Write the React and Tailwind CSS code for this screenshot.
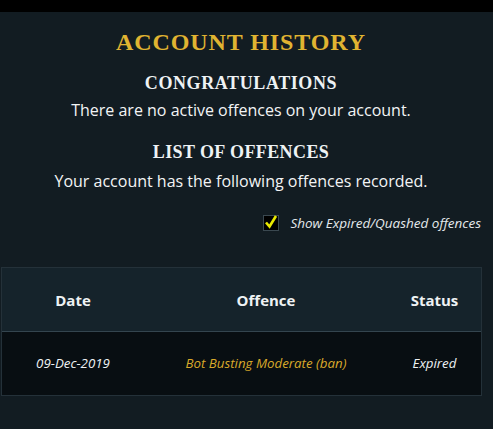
export default function App() {
  const serif = { fontFamily: "'Liberation Serif', serif" };
  return (
    <div className="w-[493px] h-[429px] bg-[#121c22] flex flex-col overflow-hidden" style={{ fontFamily: "'Open Sans', Lato, sans-serif" }}>
      <div className="h-[12px] bg-black shrink-0" />
      <div className="w-[482px] flex flex-col">
        <div className="flex flex-col items-center">
          <h1 className="mt-[16px] text-[24px] leading-[28px] font-bold text-[#e0b431] tracking-[0.9px]" style={serif}>ACCOUNT HISTORY</h1>
          <h2 className="mt-[17px] text-[18px] leading-[20px] font-bold text-[#eef2f4] tracking-[0.6px]" style={serif}>CONGRATULATIONS</h2>
          <p className="mt-[7px] text-[16px] leading-[20px] text-[#f2f4f5]">There are no active offences on your account.</p>
          <h2 className="mt-[22px] text-[18px] leading-[20px] font-bold text-[#eef2f4] tracking-[0.4px]" style={serif}>LIST OF OFFENCES</h2>
          <p className="mt-[9px] text-[16px] leading-[20px] text-[#f2f4f5]">Your account has the following offences recorded.</p>
        </div>
        <div className="mt-[22px] flex items-center justify-end pr-[1px] gap-[11px]">
          <div className="w-[16px] h-[16px] bg-black border border-[#3a4850] flex items-center justify-center">
            <svg width="14" height="14" viewBox="0 0 14 14" className="-mt-[2px]"><path d="M2 7.5 L5.5 11.5 L12 1" fill="none" stroke="#e8e800" strokeWidth="2.6" strokeLinejoin="miter" /></svg>
          </div>
          <span className="text-[13.5px] italic text-[#e4e9ec]">Show Expired/Quashed offences</span>
        </div>
        <div className="mt-[34px] w-[481px] ml-[1px] border border-[#243139]">
          <div className="flex h-[64px] items-center bg-[#15232b] border-b border-[#34454f] text-[15px] font-bold text-[#eef2f4]">
            <div className="w-[142px] text-center">Date</div>
            <div className="w-[244px] text-center">Offence</div>
            <div className="flex-1 text-center">Status</div>
          </div>
          <div className="flex h-[63px] items-center bg-[#080e12] text-[13.3px] italic">
            <div className="w-[142px] text-center text-[#eef2f4]">09-Dec-2019</div>
            <div className="w-[244px] text-center text-[#d9a92a]">Bot Busting Moderate (ban)</div>
            <div className="flex-1 text-center text-[#eef2f4]">Expired</div>
          </div>
        </div>
      </div>
    </div>
  );
}
